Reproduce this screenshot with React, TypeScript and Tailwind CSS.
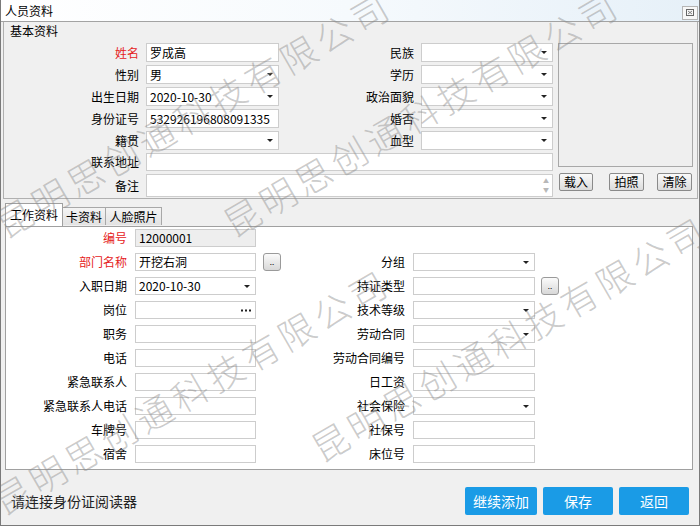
import React from 'react';

type Kind = 'text' | 'select' | 'dots' | 'memo';

// one input box, WinForms style
const Box: React.FC<{ kind?: Kind; value?: string; className: string; gray?: boolean }> = ({
  kind = 'text',
  value = '',
  className,
  gray,
}) => (
  <div
    className={`flex items-center border border-[#cdcdcd] px-[3px] text-[12px] text-black ${gray ? 'bg-[#eeeeee]' : 'bg-white'} ${className}`}
  >
    <span className="truncate leading-none">{value}</span>
    {kind === 'select' && (
      <span className="ml-auto mr-[2px] h-0 w-0 shrink-0 border-x-[3px] border-t-[3px] border-x-transparent border-t-[#222]" />
    )}
    {kind === 'dots' && (
      <svg className="ml-auto mr-[1px]" width="10" height="3" viewBox="0 0 10 3">
        <rect x="0" y="0.5" width="2" height="2" fill="#222" />
        <rect x="4" y="0.5" width="2" height="2" fill="#222" />
        <rect x="8" y="0.5" width="2" height="2" fill="#222" />
      </svg>
    )}
    {kind === 'memo' && (
      <span className="ml-auto flex h-full flex-col justify-between py-[3px] text-[6px] leading-none text-[#b8b8b8]">
        <span>▲</span>
        <span>▼</span>
      </span>
    )}
  </div>
);

const Label: React.FC<{ text: string; red?: boolean; className: string }> = ({ text, red, className }) => (
  <div className={`shrink-0 text-right text-[12px] leading-none ${red ? 'text-[#e52222]' : 'text-black'} ${className}`}>
    {text}
  </div>
);

const GrayBtn: React.FC<{ text: string; className: string }> = ({ text, className }) => (
  <div
    className={`flex items-center justify-center rounded-[2px] border border-[#8a8a8a] bg-linear-to-b from-[#fafafa] to-[#dcdcdc] text-[12px] leading-none text-black ${className}`}
  >
    {text}
  </div>
);

const DotBtn: React.FC = () => (
  <div className="flex h-[18px] w-[18px] shrink-0 items-end justify-center rounded-[3px] border border-[#9a9a9a] bg-linear-to-b from-[#fbfbfb] to-[#d8d8d8] pb-[4px] text-[8px] leading-none">
    ..
  </div>
);

type BasicRow = { l: string; lv?: string; lk?: Kind; red?: boolean; r: string };

const basicRows: BasicRow[] = [
  { l: '姓名', lv: '罗成高', red: true, r: '民族' },
  { l: '性别', lv: '男', lk: 'select', r: '学历' },
  { l: '出生日期', lv: '2020-10-30', lk: 'select', r: '政治面貌' },
  { l: '身份证号', lv: '532926196808091335', r: '婚否' },
  { l: '籍贯', lk: 'select', r: '血型' },
];

type WorkRow = {
  l: string;
  lv?: string;
  lk?: Kind;
  red?: boolean;
  gray?: boolean;
  lbtn?: boolean;
  r?: string;
  rk?: Kind;
  rbtn?: boolean;
};

const workRows: WorkRow[] = [
  { l: '编号', lv: '12000001', red: true, gray: true },
  { l: '部门名称', lv: '开挖右洞', red: true, lbtn: true, r: '分组', rk: 'select' },
  { l: '入职日期', lv: '2020-10-30', lk: 'select', r: '持证类型', rbtn: true },
  { l: '岗位', lk: 'dots', r: '技术等级', rk: 'select' },
  { l: '职务', r: '劳动合同', rk: 'select' },
  { l: '电话', r: '劳动合同编号' },
  { l: '紧急联系人', r: '日工资' },
  { l: '紧急联系人电话', r: '社会保险', rk: 'select' },
  { l: '车牌号', r: '社保号' },
  { l: '宿舍', r: '床位号' },
];

const watermarks = [
  'left-[192px] top-[113px]',
  'left-[420px] top-[112px]',
  'left-[508px] top-[337px]',
  'left-[190px] top-[390px]',
];

const App: React.FC = () => {
  return (
    <div className="relative h-[526px] w-[700px] overflow-hidden border-x border-b border-[#7a7a7a] bg-[#f0f0f0] font-['Noto_Sans_CJK_SC','Noto_Sans',sans-serif] text-black">
      {/* title bar */}
      <div className="flex h-[22px] items-center border-b border-[#a3a3a3] bg-linear-to-r from-white via-[#f6fafd] to-[#e6f0f8] pl-[4px] pr-[1px]">
        <span className="text-[12px] leading-none">人员资料</span>
        <div className="ml-auto mt-[4px] flex h-[14px] w-[16px] items-center justify-center border border-[#b5b5b5] bg-[#f7f7f7]">
          <svg width="8" height="7" viewBox="0 0 8 7">
            <rect x="0.5" y="0.5" width="7" height="6" fill="none" stroke="#666" strokeWidth="1" />
            <path d="M2 2 L6 5 M6 2 L2 5" stroke="#666" strokeWidth="0.8" />
          </svg>
        </div>
      </div>

      {/* 基本资料 group */}
      <div className="ml-[2px] mr-[1px] h-[177px] border-x border-b border-[#b0b0b0]">
        <div className="h-[21px] pl-[6px] pt-[3px] text-[12px] leading-none">基本资料</div>
        <div className="flex">
          <div className="flex w-[549px] flex-col gap-[3px]">
            {basicRows.map((row) => (
              <div key={row.l} className="flex h-[19px] items-center">
                <Label text={row.l} red={row.red} className="w-[135px]" />
                <Box kind={row.lk} value={row.lv} className="ml-[7px] h-[19px] w-[133px]" />
                <Label text={row.r} className="w-[135px]" />
                <Box kind="select" className="ml-[7px] h-[19px] w-[132px]" />
              </div>
            ))}
            <div className="flex h-[18px] items-center">
              <Label text="联系地址" className="w-[135px]" />
              <Box className="ml-[7px] h-[18px] w-[407px]" />
            </div>
            <div className="flex h-[23px] items-center">
              <Label text="备注" className="w-[135px]" />
              <Box kind="memo" className="ml-[7px] h-[23px] w-[407px]" />
            </div>
          </div>
          <div className="ml-[5px] flex w-[135px] flex-col">
            <div className="h-[124px] border border-[#a8a8a8] bg-[#efefef]" />
            <div className="mt-[6px] flex pl-[1px]">
              <GrayBtn text="载入" className="h-[18px] w-[34px]" />
              <GrayBtn text="拍照" className="ml-[16px] h-[18px] w-[35px]" />
              <GrayBtn text="清除" className="ml-[13px] h-[18px] w-[35px]" />
            </div>
          </div>
        </div>
      </div>

      {/* tabs */}
      <div className="relative z-10 mt-[6px] flex h-[21px] items-end pl-[4px]">
        <div className="flex h-[23px] w-[58px] items-center justify-center border-x border-t border-[#a0a0a0] bg-white text-[12px] leading-none">
          工作资料
        </div>
        <div className="mb-[1px] flex h-[18px] w-[43px] items-center justify-center border-r border-t border-[#a8a8a8] bg-linear-to-b from-[#f4f4f4] to-[#e2e2e2] text-[12px] leading-none">
          卡资料
        </div>
        <div className="mb-[1px] flex h-[18px] w-[56px] items-center justify-center border-r border-t border-[#a8a8a8] bg-linear-to-b from-[#f4f4f4] to-[#e2e2e2] text-[12px] leading-none">
          人脸照片
        </div>
      </div>

      {/* tab page */}
      <div className="ml-[4px] flex h-[244px] w-[688px] flex-col gap-[6px] border border-[#a0a0a0] bg-white pt-[2px]">
        {workRows.map((row) => (
          <div key={row.l} className="flex h-[18px] items-center">
            <Label text={row.l} red={row.red} className="w-[121px]" />
            <Box kind={row.lk} value={row.lv} gray={row.gray} className="ml-[8px] h-[18px] w-[121px]" />
            {row.r && (
              <>
                <div className="flex w-[149px] items-center">
                  {row.lbtn && (
                    <div className="ml-[7px]">
                      <DotBtn />
                    </div>
                  )}
                  <Label text={row.r} className="ml-auto" />
                </div>
                <Box kind={row.rk} className="ml-[8px] h-[18px] w-[122px]" />
                {row.rbtn && (
                  <div className="ml-[6px]">
                    <DotBtn />
                  </div>
                )}
              </>
            )}
          </div>
        ))}
      </div>

      {/* footer */}
      <div className="flex h-[53px] items-center pl-[10px] pr-[10px] pt-[8px]">
        <span className="text-[14px] leading-none text-[#222]">请连接身份证阅读器</span>
        <div className="ml-auto flex gap-[6px]">
          <div className="flex h-[28px] w-[72px] items-center justify-center rounded-[2px] bg-[#1a9be6] text-[14px] leading-none text-white">
            继续添加
          </div>
          <div className="flex h-[28px] w-[70px] items-center justify-center rounded-[2px] bg-[#1a9be6] text-[14px] leading-none text-white">
            保存
          </div>
          <div className="flex h-[28px] w-[70px] items-center justify-center rounded-[2px] bg-[#1a9be6] text-[14px] leading-none text-white">
            返回
          </div>
        </div>
      </div>

      {/* watermark overlay */}
      {watermarks.map((pos) => (
        <span
          key={pos}
          className={`pointer-events-none absolute z-20 -translate-x-1/2 -translate-y-1/2 -rotate-[30deg] whitespace-nowrap text-[36px] font-extralight leading-none tracking-[5px] text-[#8c8c8c]/45 ${pos}`}
        >
          昆明思创通科技有限公司
        </span>
      ))}
    </div>
  );
};

export default App;
